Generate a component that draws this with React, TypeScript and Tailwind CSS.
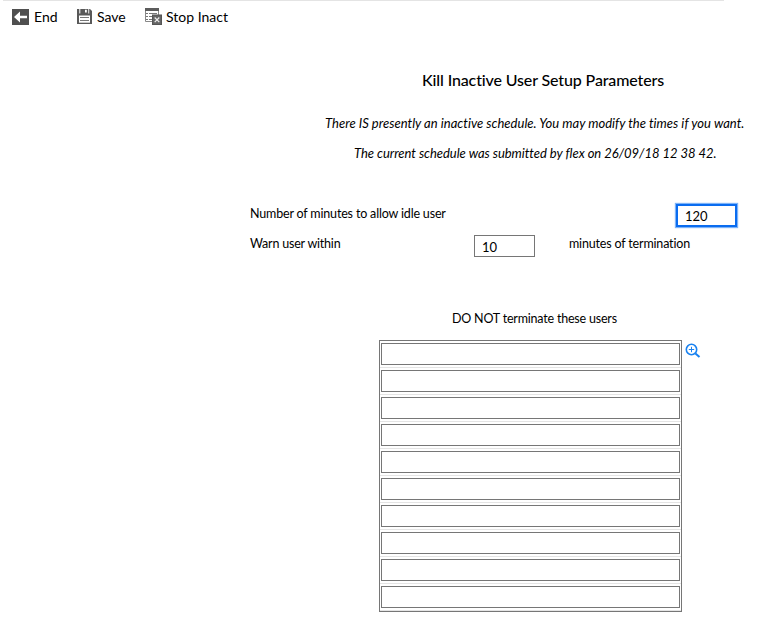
import React from "react";

function BackIcon() {
  return (
    <svg width="17" height="16" viewBox="0 0 17 16">
      <rect width="17" height="16" fill="#4f4f4f" />
      <path d="M2 8 8 2.6V6.7H15V9.3H8V13.4Z" fill="#fff" />
    </svg>
  );
}

function SaveIcon() {
  return (
    <svg width="15" height="15" viewBox="0 0 15 15">
      <path d="M0 0H13L15 2V15H0Z" fill="#595959" />
      <path d="M2.3 0H3.3V4.5H2.3ZM8 .8H9.8V3.6H8ZM11.3 0H12.2V4.5H11.3Z" fill="#fff" />
      <path d="M2 6.5H13V13.7H2Z" fill="#fff" />
      <path d="M3 8.5H12M3 11.5H12" stroke="#777" />
    </svg>
  );
}

function StopIcon() {
  return (
    <svg width="17" height="17" viewBox="0 0 17 17">
      <path d="M.5 .5H13.5V13.5H.5Z" fill="#fff" stroke="#888" />
      <path d="M0 0H14V3H0Z" fill="#5c5c5c" />
      <path d="M1 5.5H3M4 5.5H12M1 8.5H3M4 8.5H8M1 11.5H3M4 11.5H8" stroke="#777" />
      <rect x="7.5" y="7" width="9" height="9.5" fill="#666" stroke="#555" />
      <path d="M9.7 9.5 14.3 14.2M14.3 9.5 9.7 14.2" stroke="#eee" strokeWidth="1.2" />
    </svg>
  );
}

function ZoomIcon() {
  return (
    <svg width="16" height="16" viewBox="0 0 16 16" fill="none" stroke="#1a82f0">
      <circle cx="6.5" cy="6.5" r="5.2" strokeWidth="1.6" />
      <path d="M3.8 6.5H9.2M6.5 3.8V9.2" strokeWidth="1" />
      <path d="M10.4 10.4 14.5 14" strokeWidth="2" />
    </svg>
  );
}

export default function App() {
  const users = Array.from({ length: 10 }, () => "");
  return (
    <div className="h-[640px] w-[766px] overflow-hidden bg-white font-['Lato',sans-serif] text-[13px] leading-[18px] text-black [font-variant-ligatures:none]">
      <div className="ml-[3px] h-px w-[721px] bg-[#e4e4e4]" />
      <header className="flex h-[31px] items-center pl-[12px] text-[14px] whitespace-nowrap">
        <button className="flex w-[65px] items-center gap-[5px]"><BackIcon /><span>End</span></button>
        <button className="flex w-[68px] items-center gap-[5px]"><SaveIcon /><span>Save</span></button>
        <button className="flex items-center gap-[4px]"><StopIcon /><span>Stop Inact</span></button>
      </header>
      <main className="whitespace-nowrap">
        <h1 className="mt-[38px] pl-[422px] text-[16px] leading-[20px] font-medium tracking-[-0.13px]">Kill Inactive User Setup Parameters</h1>
        <p className="mt-[24px] pl-[325px] tracking-[0.02px] italic">There IS presently an inactive schedule. You may modify the times if you want.</p>
        <p className="mt-[12px] pl-[354px] tracking-[-0.03px] italic">The current schedule was submitted by flex on 26/09/18 12 38 42.</p>
        <div className="mt-[41px] flex h-[26px] items-start pl-[250px]">
          <label className="w-[426px] pt-[2px] text-[12.5px] tracking-[-0.17px]">Number of minutes to allow idle user</label>
          <input className="mt-px h-[23px] w-[61px] border-2 border-[#0a6cf0] pt-px pl-[7px] shadow-[0_0_1px_1px_#7db3f8] outline-none" defaultValue="120" />
        </div>
        <div className="mt-[6px] flex items-start pl-[250px]">
          <label className="w-[224px] text-[12.5px] tracking-[-0.2px]">Warn user within</label>
          <input className="h-[22px] w-[61px] border border-[#767676] pt-px pl-[7px] outline-none" defaultValue="10" />
          <span className="ml-[34px] text-[12.5px] tracking-[-0.17px]">minutes of termination</span>
        </div>
        <h2 className="mt-[53px] pl-[452px] text-[12.5px] tracking-[-0.2px]">DO NOT terminate these users</h2>
        <div className="mt-[12px] flex pl-[379px]">
          <div className="w-[303px] border border-[#767676]">
            {users.map((user, i) => (
              <div key={i} className="h-[27px] border-b border-[#e4e4e4] px-px py-[2px]">
                <input className="block h-[22px] w-full border border-[#767676] px-2 outline-none" defaultValue={user} />
              </div>
            ))}
          </div>
          <button className="mt-[3px] ml-[3px] h-4 w-4"><ZoomIcon /></button>
        </div>
      </main>
    </div>
  );
}
